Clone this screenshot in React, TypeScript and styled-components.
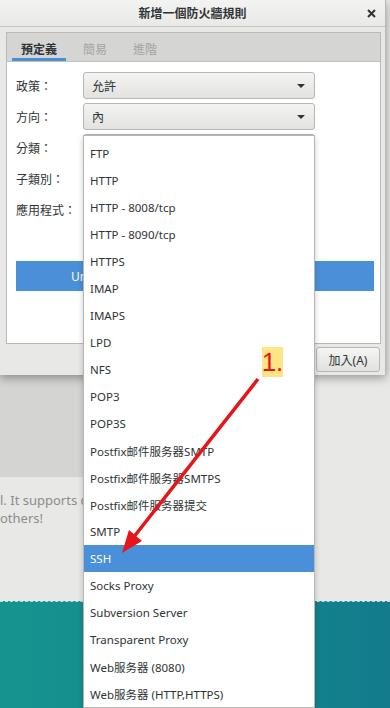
import React from 'react';
import styled, { createGlobalStyle } from 'styled-components';

const GlobalStyle = createGlobalStyle`
  html, body {
    margin: 0;
    padding: 0;
    background: #e8e8e7;
  }
  body {
    font-family: 'Noto Sans', 'Noto Sans CJK TC', sans-serif;
    color: #2e3436;
  }
  * {
    box-sizing: border-box;
  }
`;

const Screen = styled.div`
  position: relative;
  width: 390px;
  height: 708px;
  overflow: hidden;
  background: #e8e8e7;
`;

/* page behind the modal */
const Backdrop = styled.div`
  display: flex;
  flex-direction: column;
  height: 100%;
`;

const HeroShade = styled.div`
  width: 230px;
  height: 477px;
  background: #d4d4d3;
`;

const Blurb = styled.p`
  margin: 14px 0 0;
  font-size: 13px;
  line-height: 18px;
  color: #8b8d8c;
  white-space: nowrap;

  span {
    display: block;
  }
`;

const TealBand = styled.div`
  margin-top: auto;
  height: 107px;
  border-top: 1px dashed rgba(255, 255, 255, 0.7);
  background: linear-gradient(90deg, #16938f 0%, #138a8f 50%, #137b8c 100%);
`;

/* modal dialog */
const Dialog = styled.div`
  position: absolute;
  top: 0;
  left: 0;
  width: 386px;
  height: 375px;
  display: flex;
  flex-direction: column;
  background: #e8e8e7;
  border-right: 1px solid #b9b9b6;
  box-shadow: 0 3px 9px rgba(0, 0, 0, 0.35);
`;

const TitleBar = styled.div`
  height: 27px;
  display: grid;
  grid-template-columns: 1fr auto 1fr;
  align-items: center;
  padding: 0 9px;
  background: linear-gradient(#f3f3f2, #e9e9e8);
  border-bottom: 1px solid #c4c4c1;
`;

const Title = styled.div`
  grid-column: 2;
  font-size: 12px;
  font-weight: 700;
  color: #2e3436;
`;

const CloseButton = styled.div`
  justify-self: end;
  display: flex;
  align-items: center;
`;

const Body = styled.div`
  flex: 1;
  display: flex;
  flex-direction: column;
  padding: 5px 4px 0 6px;
`;

const Notebook = styled.div`
  flex: 1;
  display: flex;
  flex-direction: column;
  border: 1px solid #b9b9b5;
`;

const TabBar = styled.div`
  height: 29px;
  display: flex;
  gap: 8px;
  padding-left: 5px;
  background: #d5d5d4;
  border-bottom: 1px solid #c2c2bf;
`;

const Tab = styled.div<{ $active?: boolean }>`
  display: flex;
  align-items: center;
  padding: 6px 9px 0;
  font-size: 12px;
  font-weight: ${(p) => (p.$active ? 700 : 400)};
  color: ${(p) => (p.$active ? '#2e3436' : '#a3a4a2')};
  border-bottom: 3px solid ${(p) => (p.$active ? '#4a90d9' : 'transparent')};
`;

const Page = styled.div`
  flex: 1;
  background: #fff;
  padding: 10px 6px 0 9px;
`;

const Form = styled.div`
  display: grid;
  grid-template-columns: 67px 232px;
  grid-auto-rows: 27px;
  row-gap: 4px;
  align-items: center;
`;

const Label = styled.div`
  font-size: 12px;
  color: #2e3436;
`;

const Combo = styled.div`
  height: 27px;
  display: flex;
  align-items: center;
  justify-content: space-between;
  padding: 0 9px 0 8px;
  border: 1px solid #b7b7b3;
  border-radius: 3px;
  background: linear-gradient(#f4f4f3, #e2e2e0);
  font-size: 12px;
  color: #2e3436;
`;

const Caret = styled.span`
  width: 0;
  height: 0;
  border-left: 4px solid transparent;
  border-right: 4px solid transparent;
  border-top: 4px solid #2e3436;
`;

const InfoBar = styled.div`
  margin-top: 38px;
  height: 30px;
  display: flex;
  align-items: center;
  padding-left: 55px;
  background: #4a90d9;
  color: #fff;
  font-size: 12px;
`;

const Footer = styled.div`
  height: 31px;
  display: flex;
  justify-content: flex-end;
  align-items: center;
  gap: 4px;
  padding-right: 1px;
`;

const Button = styled.div`
  width: 64px;
  height: 25px;
  display: flex;
  align-items: center;
  justify-content: center;
  border: 1px solid #b7b7b3;
  border-radius: 3px;
  background: linear-gradient(#f5f5f4, #e1e1df);
  font-size: 12px;
  color: #2e3436;
`;

/* open combo list */
const Popup = styled.ul`
  position: absolute;
  top: 135px;
  left: 83px;
  width: 232px;
  margin: 0;
  padding: 4px 0 0;
  list-style: none;
  background: #fff;
  border: 1px solid #b5b5b2;
  box-shadow: 0 2px 6px rgba(0, 0, 0, 0.2);
`;

const Item = styled.li<{ $selected?: boolean }>`
  height: 27px;
  display: flex;
  align-items: center;
  padding-left: 6px;
  font-size: 11.5px;
  white-space: nowrap;
  color: ${(p) => (p.$selected ? '#fff' : '#2e3436')};
  background: ${(p) => (p.$selected ? '#4a90d9' : 'transparent')};
`;

/* tutorial annotation */
const StepBadge = styled.div`
  position: absolute;
  top: 347px;
  left: 262px;
  width: 21px;
  height: 30px;
  display: flex;
  align-items: center;
  justify-content: center;
  background: #ffe583;
  color: #e8141a;
  font-family: 'Liberation Sans', Arial, sans-serif;
  font-size: 26px;
  line-height: 1;
`;

const ArrowLayer = styled.svg`
  position: absolute;
  inset: 0;
  pointer-events: none;
`;

const services = [
  'FTP',
  'HTTP',
  'HTTP - 8008/tcp',
  'HTTP - 8090/tcp',
  'HTTPS',
  'IMAP',
  'IMAPS',
  'LPD',
  'NFS',
  'POP3',
  'POP3S',
  'Postfix邮件服务器SMTP',
  'Postfix邮件服务器SMTPS',
  'Postfix邮件服务器提交',
  'SMTP',
  'SSH',
  'Socks Proxy',
  'Subversion Server',
  'Transparent Proxy',
  'Web服务器 (8080)',
  'Web服务器 (HTTP,HTTPS)',
];

const fields = [
  { label: '政策：', value: '允許' },
  { label: '方向：', value: '內' },
  { label: '分類：', value: '' },
  { label: '子類別：', value: '' },
  { label: '應用程式：', value: '' },
];

export default function App() {
  return (
    <>
      <GlobalStyle />
      <Screen>
        <Backdrop>
          <HeroShade />
          <Blurb>
            <span>l. It supports co</span>
            <span>others!</span>
          </Blurb>
          <TealBand />
        </Backdrop>

        <Dialog>
          <TitleBar>
            <Title>新增一個防火牆規則</Title>
            <CloseButton>
              <svg width="9" height="9" viewBox="0 0 9 9">
                <path d="M1 1 L8 8 M8 1 L1 8" stroke="#2e3436" strokeWidth="2" />
              </svg>
            </CloseButton>
          </TitleBar>
          <Body>
            <Notebook>
              <TabBar>
                <Tab $active>預定義</Tab>
                <Tab>簡易</Tab>
                <Tab>進階</Tab>
              </TabBar>
              <Page>
                <Form>
                  {fields.map((f) => (
                    <React.Fragment key={f.label}>
                      <Label>{f.label}</Label>
                      <Combo>
                        <span>{f.value}</span>
                        <Caret />
                      </Combo>
                    </React.Fragment>
                  ))}
                </Form>
                <InfoBar>Unblock service</InfoBar>
              </Page>
            </Notebook>
            <Footer>
              <Button>取消(C)</Button>
              <Button>加入(A)</Button>
            </Footer>
          </Body>
        </Dialog>

        <Popup>
          {services.map((s) => (
            <Item key={s} $selected={s === 'SSH'}>
              {s}
            </Item>
          ))}
        </Popup>

        <StepBadge>1.</StepBadge>
        <ArrowLayer width="390" height="708" viewBox="0 0 390 708">
          <line x1="258" y1="379" x2="133" y2="538" stroke="#e5151a" strokeWidth="3.5" />
          <polygon points="122,553 129,530 142,541" fill="#e5151a" />
        </ArrowLayer>
      </Screen>
    </>
  );
}
